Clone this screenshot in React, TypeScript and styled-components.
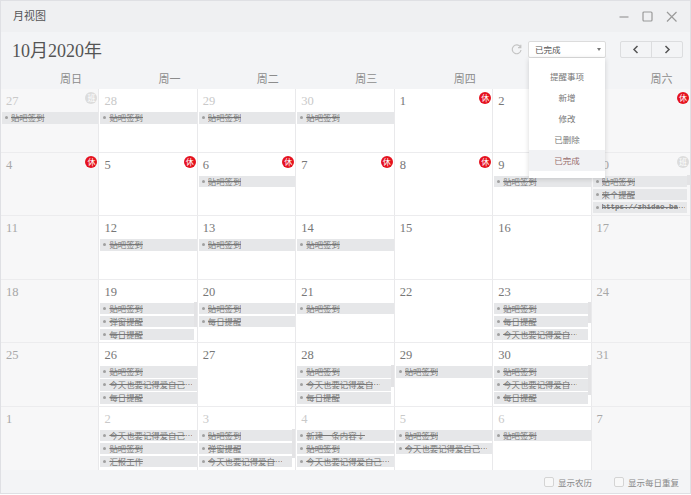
import React from "react";
import styled, { createGlobalStyle } from "styled-components";

const Global = createGlobalStyle`
  html, body { margin: 0; padding: 0; background: #fff; }
  body { font-family: "Noto Sans CJK SC", "Liberation Sans", sans-serif; }
  * { box-sizing: border-box; }
`;

const Win = styled.div`
  width: 691px;
  height: 494px;
  border: 1px solid #dfe0e4;
  background: #f3f4f6;
  display: flex;
  flex-direction: column;
  overflow: hidden;
`;
const TitleBar = styled.div`
  height: 31px;
  flex: none;
  background: #eff0f2;
  display: flex;
  align-items: center;
  justify-content: space-between;
  padding: 0 13px 0 12px;
`;
const Title = styled.div`
  font-size: 11px;
  color: #555;
  padding-bottom: 3px;
`;
const WinButtons = styled.div`
  display: flex;
  gap: 13px;
  align-items: center;
`;
const WinIcon = styled.svg`
  width: 11px;
  height: 11px;
  stroke: #9a9a9a;
  fill: none;
  stroke-width: 1.2;
  display: block;
`;
const Toolbar = styled.div`
  height: 34px;
  flex: none;
  display: flex;
  align-items: center;
  padding: 0 7px 0 11px;
`;
const MonthTitle = styled.div`
  font-family: "Liberation Serif", "Noto Sans CJK SC", serif;
  font-size: 18px;
  color: #555;
  flex: 1;
`;
const Refresh = styled.svg`
  width: 11px;
  height: 11px;
  stroke: #c4c4c4;
  fill: none;
  stroke-width: 1.2;
  margin-right: 6px;
  display: block;
`;
const SelectWrap = styled.div`
  position: relative;
  margin-right: 14px;
`;
const Select = styled.div`
  width: 78px;
  height: 17px;
  background: #fff;
  border: 1px solid #dcdcdc;
  border-radius: 2px;
  display: flex;
  align-items: center;
  justify-content: space-between;
  padding: 0 4px 0 6px;
  font-size: 8.5px;
  color: #555;
`;
const Caret = styled.span`
  width: 0;
  height: 0;
  border-left: 2.5px solid transparent;
  border-right: 2.5px solid transparent;
  border-top: 3px solid #777;
`;
const Menu = styled.div`
  position: absolute;
  z-index: 5;
  left: 1px;
  top: 17px;
  width: 76px;
  padding: 8px 0 7px;
  background: #fff;
  box-shadow: 0 1px 5px rgba(0, 0, 0, 0.16);
`;
const MenuItem = styled.div<{ $active?: boolean }>`
  height: 21px;
  line-height: 21px;
  text-align: center;
  font-size: 8.5px;
  color: ${(p) => (p.$active ? "#9a6f6f" : "#777")};
  background: ${(p) => (p.$active ? "#f1f2f4" : "transparent")};
`;
const Nav = styled.div`
  display: flex;
  height: 17px;
  width: 63px;
  border: 1px solid #dcdddf;
  border-radius: 2px;
`;
const NavBtn = styled.div`
  flex: 1;
  display: flex;
  align-items: center;
  justify-content: center;
  & + & { border-left: 1px solid #dcdddf; }
`;
const Chevron = styled.svg`
  width: 8px;
  height: 9px;
  stroke: #555;
  fill: none;
  stroke-width: 1.5;
  display: block;
`;
const WeekHead = styled.div`
  height: 23px;
  flex: none;
  display: grid;
  grid-template-columns: repeat(7, 1fr);
`;
const WeekName = styled.div`
  font-size: 11px;
  line-height: 25px;
  color: #8c8c8c;
  padding-left: 59px;
`;
const Grid = styled.div`
  height: 381px;
  flex: none;
  display: grid;
  grid-template-columns: repeat(7, 1fr);
  grid-template-rows: repeat(6, 1fr);
  background: #fff;
`;
const Cell = styled.div<{ $weekend: boolean }>`
  position: relative;
  min-width: 0;
  min-height: 0;
  overflow: hidden;
  background: ${(p) => (p.$weekend ? "#f7f7f8" : "#fff")};
  border-right: 1px solid #e9e9eb;
  border-bottom: 1px solid #ececee;
  padding: 5px 0 0 1px;
  &:nth-child(7n) { border-right: none; }
  &:nth-last-child(-n + 7) { border-bottom: none; }
`;
const DayNum = styled.div<{ $tone: string }>`
  font-family: "Liberation Serif", serif;
  font-size: 12.5px;
  line-height: 14px;
  height: 17px;
  margin-left: 4px;
  color: ${(p) => p.$tone};
`;
const Events = styled.div<{ $scroll: boolean }>`
  display: flex;
  flex-direction: column;
  gap: 1.5px;
  margin-right: ${(p) => (p.$scroll ? "3px" : "0")};
  padding-top: 1px;
`;
const Event = styled.div`
  height: 11.5px;
  line-height: 11.5px;
  background: #e6e7e9;
  display: flex;
  align-items: center;
  padding-left: 3px;
  font-size: 8.4px;
  color: #777;
  min-width: 0;
`;
const Dot = styled.span`
  flex: none;
  width: 3px;
  height: 3px;
  border-radius: 50%;
  background: #a0a0a0;
  margin-right: 3px;
`;
const EventText = styled.span<{ $url?: boolean }>`
  min-width: 0;
  overflow: hidden;
  white-space: nowrap;
  text-decoration: line-through;
  font-family: ${(p) => (p.$url ? '"Liberation Mono", monospace' : "inherit")};
  font-size: ${(p) => (p.$url ? "7.5px" : "inherit")};
  font-weight: ${(p) => (p.$url ? 700 : 400)};
`;
const More = styled.span`
  flex: none;
  width: 7px;
  overflow: hidden;
  white-space: nowrap;
`;
const Badge = styled.div<{ $kind: string }>`
  position: absolute;
  top: 3px;
  right: 1px;
  width: 12px;
  height: 12px;
  border-radius: 50%;
  background: ${(p) => (p.$kind === "休" ? "#e5121f" : "#dcdcdc")};
  color: #fff;
  font-size: 8px;
  line-height: 12px;
  text-align: center;
`;
const ScrollThumb = styled.div<{ $h: number }>`
  position: absolute;
  right: 0;
  top: 22px;
  width: 3px;
  height: ${(p) => p.$h}px;
  background: #e3e3e5;
`;
const Footer = styled.div`
  flex: 1;
  display: flex;
  justify-content: flex-end;
  align-items: center;
  gap: 22px;
  padding: 0 11px 0 0;
  background: #f3f4f6;
`;
const Check = styled.label`
  display: flex;
  align-items: center;
  gap: 4px;
  font-size: 8.5px;
  color: #888;
`;
const Box = styled.span`
  width: 10px;
  height: 10px;
  background: #f8f8f8;
  border: 1px solid #d4d4d4;
  border-radius: 2px;
`;

const T = "贴吧签到", P = "弹窗提醒", D = "每日提醒";
const J = "今天也要记得爱自己⋯", K = "今天也要记得爱自⋯";
type Day = { n: number; out?: boolean; b?: string; ev?: string[]; thumb?: number };
const days: Day[] = [
  { n: 27, out: true, b: "班", ev: [T] }, { n: 28, out: true, ev: [T] }, { n: 29, out: true, ev: [T] },
  { n: 30, out: true, ev: [T] }, { n: 1, b: "休" }, { n: 2, b: "休" }, { n: 3, b: "休" },
  { n: 4, b: "休" }, { n: 5, b: "休" }, { n: 6, b: "休", ev: [T] }, { n: 7, b: "休" },
  { n: 8, b: "休" }, { n: 9, ev: [T] },
  { n: 10, b: "班", ev: [T, "来个提醒", "https://zhidao.ba⋯"], thumb: 10 },
  { n: 11 }, { n: 12, ev: [T] }, { n: 13, ev: [T] }, { n: 14, ev: [T] }, { n: 15 }, { n: 16 }, { n: 17 },
  { n: 18 }, { n: 19, ev: [T, P, D], thumb: 25 }, { n: 20, ev: [T, D] }, { n: 21, ev: [T] }, { n: 22 },
  { n: 23, ev: [T, D, K], thumb: 21 }, { n: 24 },
  { n: 25 }, { n: 26, ev: [T, J, D] }, { n: 27 }, { n: 28, ev: [T, K, D], thumb: 22 }, { n: 29, ev: [T] },
  { n: 30, ev: [T, K, D], thumb: 30 }, { n: 31 },
  { n: 1, out: true }, { n: 2, out: true, ev: [J, T, "汇报工作"] }, { n: 3, out: true, ev: [T, P, K], thumb: 29 },
  { n: 4, out: true, ev: ["新建一条内容↓", T, J] }, { n: 5, out: true, ev: [T, J] }, { n: 6, out: true, ev: [T] },
  { n: 7, out: true },
];
const tone = (i: number, d: Day) => {
  const wk = i % 7 === 0 || i % 7 === 6;
  if (i === 0) return "#c9c9c9";
  if (wk) return "#a8a8a8";
  return d.out ? "#c9c9c9" : "#777";
};

export default function App() {
  return (
    <Win>
      <Global />
      <TitleBar>
        <Title>月视图</Title>
        <WinButtons>
          <WinIcon viewBox="0 0 11 11"><path d="M1.5 6h9" /></WinIcon>
          <WinIcon viewBox="0 0 11 11"><rect x="1" y="1" width="9" height="9" rx="1" /></WinIcon>
          <WinIcon viewBox="0 0 11 11"><path d="M1 1l9.5 9.5M10.5 1L1 10.5" /></WinIcon>
        </WinButtons>
      </TitleBar>
      <Toolbar>
        <MonthTitle>10月2020年</MonthTitle>
        <Refresh viewBox="0 0 11 11"><path d="M9.5 3.2A4.4 4.4 0 1 0 10 6M9.8 0.8v2.8H7" /></Refresh>
        <SelectWrap>
          <Select>已完成<Caret /></Select>
          <Menu>
            <MenuItem>提醒事项</MenuItem>
            <MenuItem>新增</MenuItem>
            <MenuItem>修改</MenuItem>
            <MenuItem>已删除</MenuItem>
            <MenuItem $active>已完成</MenuItem>
          </Menu>
        </SelectWrap>
        <Nav>
          <NavBtn><Chevron viewBox="0 0 8 9"><path d="M5.5 1L2 4.5 5.5 8" /></Chevron></NavBtn>
          <NavBtn><Chevron viewBox="0 0 8 9"><path d="M2.5 1L6 4.5 2.5 8" /></Chevron></NavBtn>
        </Nav>
      </Toolbar>
      <WeekHead>
        {["周日", "周一", "周二", "周三", "周四", "周五", "周六"].map((w) => <WeekName key={w}>{w}</WeekName>)}
      </WeekHead>
      <Grid>
        {days.map((d, i) => (
          <Cell key={i} $weekend={i % 7 === 0 || i % 7 === 6}>
            <DayNum $tone={tone(i, d)}>{d.n}</DayNum>
            {d.b && <Badge $kind={d.b}>{d.b}</Badge>}
            {d.ev && (
              <Events $scroll={!!d.thumb}>
                {d.ev.map((e, k) => (
                  <Event key={k}>
                    <Dot />
                    <EventText $url={e.startsWith("http")}>{e.replace("⋯", "")}</EventText>
                    {e.endsWith("⋯") && <More>⋯</More>}
                  </Event>
                ))}
              </Events>
            )}
            {d.thumb && <ScrollThumb $h={d.thumb} />}
          </Cell>
        ))}
      </Grid>
      <Footer>
        <Check><Box />显示农历</Check>
        <Check><Box />显示每日重复</Check>
      </Footer>
    </Win>
  );
}
